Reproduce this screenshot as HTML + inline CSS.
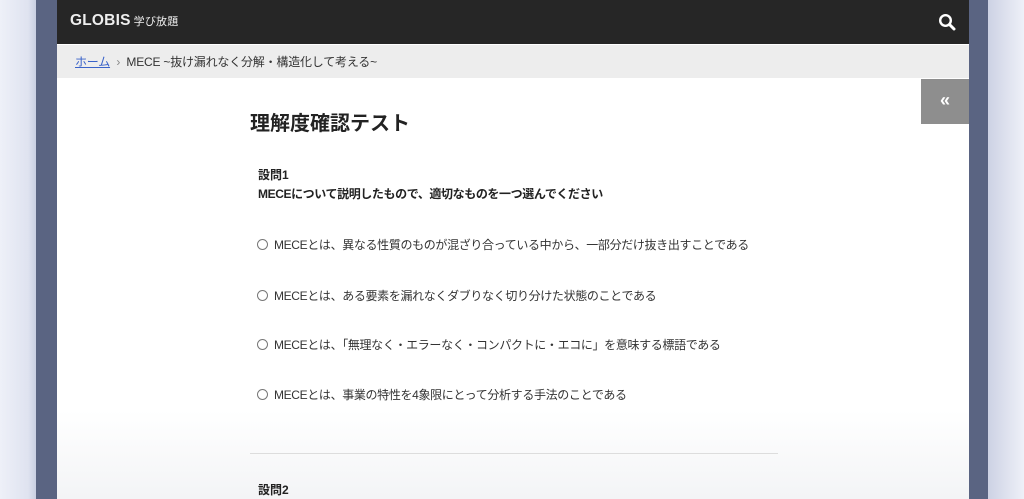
<!DOCTYPE html>
<html><head><meta charset="utf-8"><style>
*{margin:0;padding:0;box-sizing:border-box}
body{width:1024px;height:499px;overflow:hidden;position:relative;font-family:"Liberation Sans","Noto Sans CJK JP",sans-serif;background:linear-gradient(90deg,#eef0f8 0,#dfe3f0 28px,#c9cfe2 36px,#c9cfe2 36px);}
.bgr{position:absolute;left:988px;top:0;width:36px;height:499px;background:linear-gradient(90deg,#cdd2e4,#eef0f8)}
.strip{position:absolute;top:0;height:499px;background:#5a6482}
.main{position:absolute;left:57px;top:0;width:912px;height:499px;background:linear-gradient(180deg,#fff 0,#fff 410px,#f3f4f6 499px)}
.hdr{position:absolute;left:0;top:0;width:912px;height:44px;background:#262626}
.logo{position:absolute;left:13px;top:12px;color:#eee;font-weight:bold;font-size:15.5px;letter-spacing:.2px}
.logo span{font-size:11px;font-weight:normal;margin-left:3px}
.bc{position:absolute;left:0;top:45px;width:912px;height:33px;background:#ededed;font-size:12px;color:#333;padding:8px 0 0 18px;letter-spacing:-.2px}
.bc a{color:#3a63c9;text-decoration:underline}
.side{position:absolute;left:864px;top:79px;width:48px;height:45px;background:#8e8e8e;color:#fff;font-size:18px;font-weight:bold;text-align:center;line-height:42px}
.t{position:absolute;color:#222}
.r{position:absolute;width:11px;height:11px;border:1px solid #777;border-radius:50%}
.o{position:absolute;left:274px;font-size:12px;color:#333;letter-spacing:-.35px}
</style></head><body>
<div class="bgr"></div>
<div class="strip" style="left:36px;width:21px"></div>
<div class="strip" style="left:969px;width:19px"></div>
<div class="main">
<div class="hdr"><div class="logo">GLOBIS<span>学び放題</span></div>
<svg style="position:absolute;left:881px;top:13px" width="18" height="18" viewBox="0 0 18 18"><circle cx="7.5" cy="7.5" r="5.3" fill="none" stroke="#fff" stroke-width="2.4"/><path d="M11.5 11.5L16 16" stroke="#fff" stroke-width="3" stroke-linecap="round"/></svg></div>
<div class="bc"><a>ホーム</a>&nbsp;&nbsp;<span style="color:#888">›</span>&nbsp;&nbsp;MECE ~抜け漏れなく分解・構造化して考える~</div>
<div class="side">«</div>
</div>
<div class="t" style="left:250px;top:107px;font-size:20px;font-weight:bold">理解度確認テスト</div>
<div class="t" style="left:258px;top:166px;font-size:12px;font-weight:bold">設問1</div>
<div class="t" style="left:258px;top:185px;font-size:12px;font-weight:bold;letter-spacing:-.4px">MECEについて説明したもので、適切なものを一つ選んでください</div>
<div class="r" style="left:257px;top:239px"></div><div class="o" style="top:236px">MECEとは、異なる性質のものが混ざり合っている中から、一部分だけ抜き出すことである</div>
<div class="r" style="left:257px;top:290px"></div><div class="o" style="top:287px">MECEとは、ある要素を漏れなくダブりなく切り分けた状態のことである</div>
<div class="r" style="left:257px;top:339px"></div><div class="o" style="top:336px">MECEとは、「無理なく・エラーなく・コンパクトに・エコに」を意味する標語である</div>
<div class="r" style="left:257px;top:389px"></div><div class="o" style="top:386px">MECEとは、事業の特性を4象限にとって分析する手法のことである</div>
<div style="position:absolute;left:250px;top:453px;width:528px;height:1px;background:#ddd"></div>
<div class="t" style="left:258px;top:481px;font-size:12px;font-weight:bold">設問2</div>
</body></html>
